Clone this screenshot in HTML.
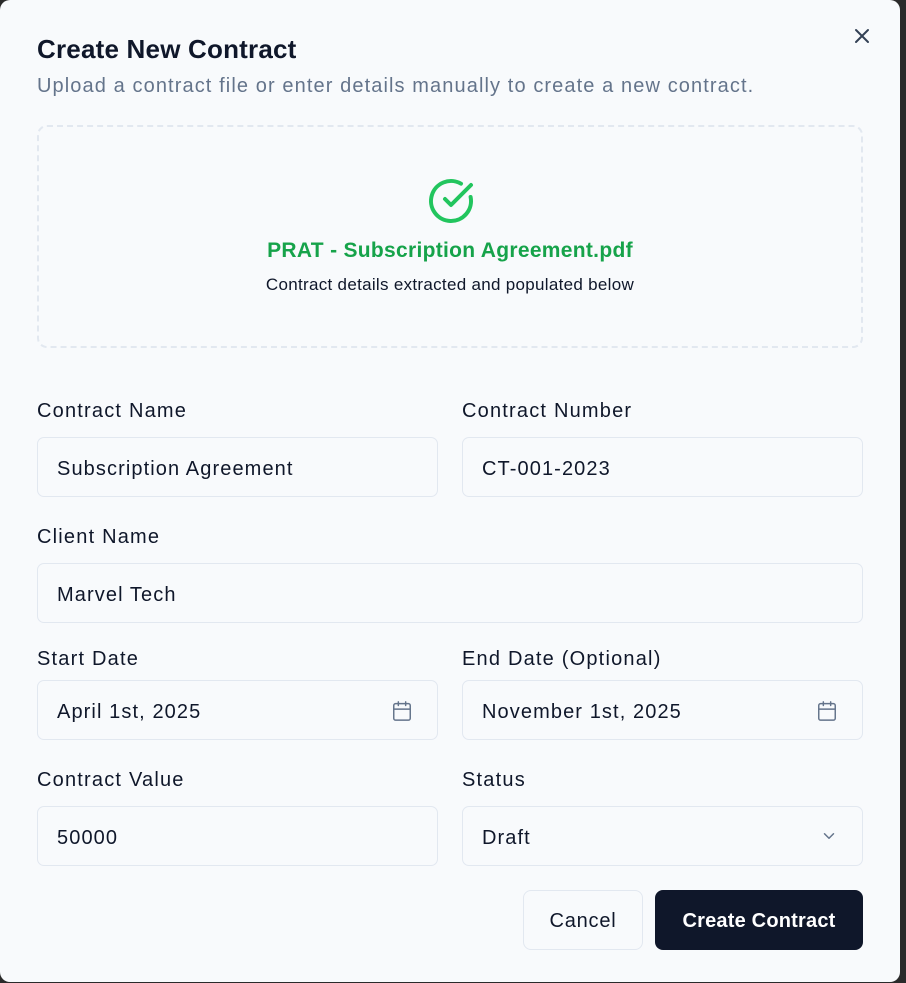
<!DOCTYPE html>
<html><head><style>
*{box-sizing:border-box;margin:0;padding:0}
body{width:906px;height:983px;background:#2a2a2a;font-family:"Liberation Sans",sans-serif;position:relative;overflow:hidden;color:#0f172a}
.dlg{position:absolute;left:0;top:0;width:900px;height:982px;background:#f8fafc;border-radius:10px}
.a{position:absolute}
.lbl{position:absolute;font-size:20px;font-weight:500;color:#0f172a;letter-spacing:1.2px}
.in{position:absolute;height:60px;border:1px solid #e2e8f0;border-radius:7px;font-size:20px;padding-left:19px;line-height:62px;color:#0f172a;background:#f8fafc;letter-spacing:1.1px}
.ic{position:absolute;right:24px;top:19px}
</style></head><body>
<div class="dlg">
<div class="a" style="left:37px;top:34px;font-size:26px;font-weight:700;letter-spacing:0.2px">Create New Contract</div>
<svg class="a" style="left:853px;top:27px" width="18" height="18" viewBox="0 0 18 18"><path d="M3 3L15 15M15 3L3 15" stroke="#334155" stroke-width="2" stroke-linecap="round"/></svg>
<div class="a" style="left:37px;top:75px;font-size:20px;color:#64748b;letter-spacing:1.1px">Upload a contract file or enter details manually to create a new contract.</div>
<div class="a" style="left:37px;top:125px;width:826px;height:223px;border:2px dashed #e2e8f0;border-radius:10px"></div>
<svg class="a" style="left:427px;top:177px" width="48" height="48" viewBox="0 0 24 24" fill="none" stroke="#22c55e" stroke-width="2" stroke-linecap="round" stroke-linejoin="round"><path d="M21.8 10A10 10 0 1 1 17 3.34"/><path d="M9 11l3 3L22 4"/></svg>
<div class="a" style="left:0;width:900px;text-align:center;top:239px;font-size:21px;font-weight:700;color:#16a34a;letter-spacing:0.3px">PRAT - Subscription Agreement.pdf</div>
<div class="a" style="left:0;width:900px;text-align:center;top:275px;font-size:17px;color:#0f172a;letter-spacing:0.3px">Contract details extracted and populated below</div>

<div class="lbl" style="left:37px;top:400px">Contract Name</div>
<div class="lbl" style="left:462px;top:400px">Contract Number</div>
<div class="in" style="left:37px;top:437px;width:401px">Subscription Agreement</div>
<div class="in" style="left:462px;top:437px;width:401px">CT-001-2023</div>

<div class="lbl" style="left:37px;top:526px">Client Name</div>
<div class="in" style="left:37px;top:563px;width:826px">Marvel Tech</div>

<div class="lbl" style="left:37px;top:648px">Start Date</div>
<div class="lbl" style="left:462px;top:648px">End Date (Optional)</div>
<div class="in" style="left:37px;top:680px;width:401px">April 1st, 2025<svg class="ic" width="22" height="22" viewBox="0 0 24 24" fill="none" stroke="#64748b" stroke-width="1.6" stroke-linecap="round"><rect x="3" y="4" width="18" height="18" rx="2"/><path d="M8 2v4M16 2v4M3 10h18"/></svg></div>
<div class="in" style="left:462px;top:680px;width:401px">November 1st, 2025<svg class="ic" width="22" height="22" viewBox="0 0 24 24" fill="none" stroke="#64748b" stroke-width="1.6" stroke-linecap="round"><rect x="3" y="4" width="18" height="18" rx="2"/><path d="M8 2v4M16 2v4M3 10h18"/></svg></div>

<div class="lbl" style="left:37px;top:769px">Contract Value</div>
<div class="lbl" style="left:462px;top:769px">Status</div>
<div class="in" style="left:37px;top:806px;width:401px">50000</div>
<div class="in" style="left:462px;top:806px;width:401px">Draft<svg class="ic" style="top:20px" width="18" height="18" viewBox="0 0 24 24" fill="none" stroke="#64748b" stroke-width="2" stroke-linecap="round" stroke-linejoin="round"><path d="M6 9l6 6 6-6"/></svg></div>

<div class="a" style="left:523px;top:890px;width:120px;height:60px;border:1px solid #e2e8f0;border-radius:8px;text-align:center;line-height:60px;font-size:20px;font-weight:500;letter-spacing:0.8px">Cancel</div>
<div class="a" style="left:655px;top:890px;width:208px;height:60px;background:#0f172a;border-radius:8px;text-align:center;line-height:62px;font-size:20px;font-weight:700;color:#fff;letter-spacing:0.2px">Create Contract</div>
</div>
</body></html>
